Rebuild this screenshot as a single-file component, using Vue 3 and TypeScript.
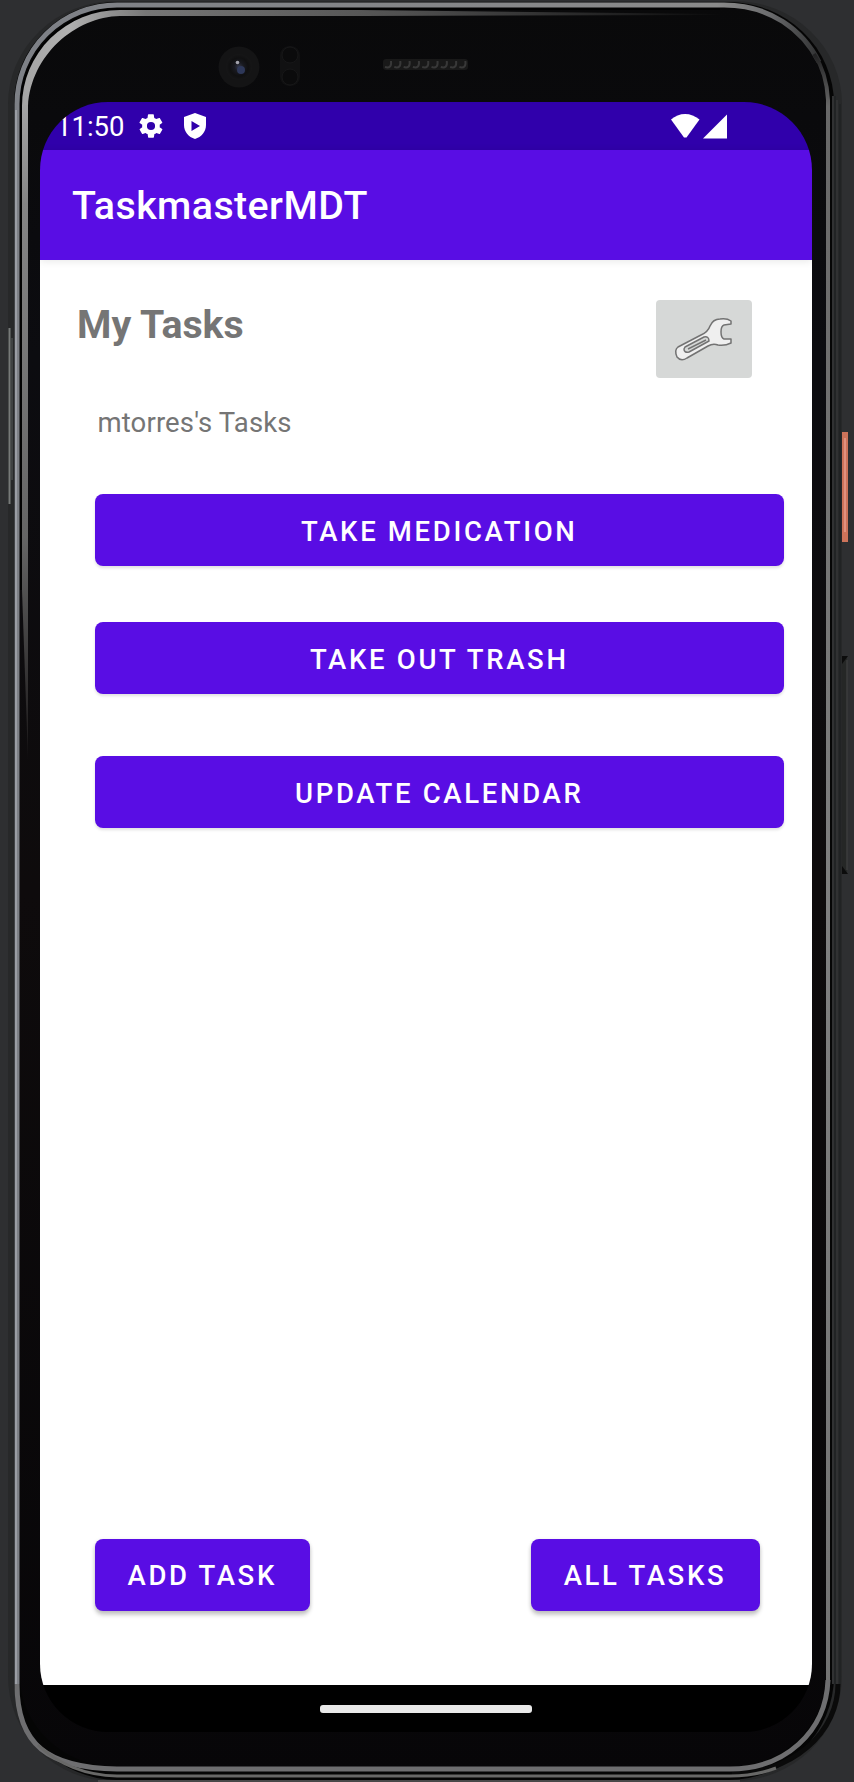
<script setup lang="ts">
interface Task {
  id: number
  title: string
}

const tasks: Task[] = [
  { id: 1, title: 'Take Medication' },
  { id: 2, title: 'Take Out Trash' },
  { id: 3, title: 'Update Calendar' },
]

const speakerHoles: number[] = Array.from({ length: 9 }, (_, i) => 388 + i * 9.3)
</script>

<template>
  <div class="stage">
    <svg class="device" viewBox="0 0 854 1782" width="854" height="1782" aria-hidden="true">
      <defs>
        <linearGradient id="rim" gradientUnits="userSpaceOnUse" x1="0" y1="0" x2="854" y2="0">
          <stop offset="0" stop-color="#7d8086" />
          <stop offset="0.84" stop-color="#8a8a8a" />
          <stop offset="0.9" stop-color="#6c6d6f" />
          <stop offset="0.96" stop-color="#303132" />
        </linearGradient>
        <linearGradient id="bevelTop" gradientUnits="userSpaceOnUse" x1="20" y1="0" x2="720" y2="0">
          <stop offset="0" stop-color="#a4a4a4" />
          <stop offset="0.07" stop-color="#b0b0b0" />
          <stop offset="0.18" stop-color="#777777" />
          <stop offset="0.55" stop-color="#505050" />
          <stop offset="1" stop-color="#0a0a0b" />
        </linearGradient>
        <linearGradient id="bevelSide" gradientUnits="userSpaceOnUse" x1="0" y1="104" x2="0" y2="770">
          <stop offset="0" stop-color="#a4a4a4" />
          <stop offset="0.15" stop-color="#858585" />
          <stop offset="0.65" stop-color="#656565" />
          <stop offset="1" stop-color="#151213" />
        </linearGradient>
        <linearGradient id="rightRim" gradientUnits="userSpaceOnUse" x1="0" y1="55" x2="0" y2="1760">
          <stop offset="0" stop-color="#222223" />
          <stop offset="0.03" stop-color="#686868" />
          <stop offset="0.5" stop-color="#808080" />
          <stop offset="0.96" stop-color="#737373" />
          <stop offset="1" stop-color="#4a4a4a" />
        </linearGradient>
        <linearGradient id="body" gradientUnits="userSpaceOnUse" x1="0" y1="0" x2="0" y2="1782">
          <stop offset="0" stop-color="#09090a" />
          <stop offset="0.2" stop-color="#0c0c10" />
          <stop offset="0.5" stop-color="#0e0b0c" />
          <stop offset="1" stop-color="#070608" />
        </linearGradient>
        <radialGradient id="lens">
          <stop offset="0" stop-color="#34384c" />
          <stop offset="0.35" stop-color="#191a20" />
          <stop offset="0.7" stop-color="#101011" />
          <stop offset="1" stop-color="#161617" />
        </radialGradient>
      </defs>

      <path d="M8 104 A108 103 0 0 1 116 1 H734 A108 103 0 0 1 842 104 V1676 A108 105 0 0 1 734 1781 H112 A104 105 0 0 1 8 1676 Z" fill="#272829" />
      <path d="M14 104 A103 102 0 0 1 117 2 H728 A106 102 0 0 1 834 104 V1676 A106 104 0 0 1 728 1780 H117 A103 104 0 0 1 14 1676 Z" fill="#050505" />
      <path d="M833 96 V1684 M837 100 V1684" fill="none" stroke="#303132" stroke-width="2" />
      <path d="M835 96 V1684 M840 104 V1684" fill="none" stroke="#212324" stroke-width="2" />
      <path d="M838 1684 A106 90 0 0 1 732 1774" fill="none" stroke="#0a0a0a" stroke-width="5" />
      <path d="M20 104 A98 96 0 0 1 118 8 H728 A98 96 0 0 1 826 104 V1676 A98 91 0 0 1 728 1767 H118 A98 91 0 0 1 20 1676 Z" fill="url(#body)" />
      <path d="M17 1684 V104 A100 99 0 0 1 117 5 H724 C770 5 803 30 819 62" fill="none" stroke="url(#rim)" stroke-width="5" />
      <path d="M16 1684 V110" stroke="#9a9da4" stroke-width="2" />
      <path d="M21 590 V106 A98 97 0 0 1 119 9 H720" fill="none" stroke="#020202" stroke-width="2" />
      <path d="M22 106 A98 96 0 0 1 120 10 H360 L720 14 V15 L360 16 H120 C75 17 31 55 28 106 Z" fill="url(#bevelTop)" />
      <path d="M22 105 H28 V760 L22 590 Z" fill="url(#bevelSide)" />
      <path d="M828 1682 V100 C827 80 822 66 814 54" fill="none" stroke="url(#rightRim)" stroke-width="4" />
      <path d="M828 1680 C826 1732 785 1769 730 1769 H117 C48 1768 17 1745 17 1684" fill="none" stroke="#6e6e70" stroke-width="5" />
      <path d="M776 1768 Q755 1776 730 1776 H117 Q70 1775 38 1745" fill="none" stroke="#686867" stroke-width="3" />
      <path d="M98 1781 H740" stroke="#484848" stroke-width="2" />

      <path d="M9.5 328 V504" stroke="#777a79" stroke-width="2" />
      <path d="M12 338 V480" stroke="#484b4b" stroke-width="1.5" />
      <rect x="842" y="432" width="6" height="110" fill="#cd735a" />
      <rect x="844" y="438" width="2" height="94" fill="#e2917e" />
      <rect x="842" y="656" width="5" height="218" fill="#252726" />
      <path d="M847 660 V870" stroke="#3b3d3c" stroke-width="1.5" />
      <path d="M842 656 H848 L842 664 Z M842 866 L848 874 H842 Z" fill="#0c0c0c" />

      <circle cx="239" cy="67" r="20.5" fill="#141415" />
      <circle cx="239" cy="67" r="13" fill="url(#lens)" />
      <circle cx="241" cy="70" r="4" fill="#2e3859" />
      <circle cx="237.5" cy="62.5" r="1.8" fill="#a3a3ac" />
      <rect x="280" y="46" width="20" height="40" rx="9" fill="#111112" />
      <circle cx="290" cy="55" r="8" fill="#0b0b0c" stroke="#171718" />
      <circle cx="290" cy="77" r="8" fill="#0b0b0c" stroke="#171718" />
      <rect x="383" y="59" width="85" height="11" rx="3" fill="#191919" />
      <path v-for="x in speakerHoles" :key="x" :d="`M${x - 3} 67 Q${x + 4} 69 ${x + 3} 61`" fill="none" stroke="#383838" stroke-width="2" />
    </svg>

    <main class="screen">
      <div class="status">
        <span class="clock">11:50</span>
        <svg class="gear" viewBox="0 0 24 24" width="28" height="28">
          <path fill="#fff" fill-rule="evenodd" d="M19.4 13c.1-.3.1-.7.1-1s0-.7-.1-1l2.1-1.6c.2-.2.3-.4.1-.7l-2-3.4c-.1-.2-.4-.3-.6-.2l-2.5 1c-.5-.4-1.1-.7-1.7-1L14.4 2.4c0-.2-.2-.4-.5-.4h-4c-.2 0-.4.2-.5.4L9 5.1c-.6.3-1.2.6-1.7 1l-2.5-1c-.2-.1-.5 0-.6.2l-2 3.4c-.1.2-.1.5.1.7L4.500 11c0 .3-.1.7-.1 1s0 .7.1 1l-2.1 1.6c-.2.2-.2.4-.1.7l2 3.4c.1.2.4.3.6.2l2.500-1c.5.4 1.1.7 1.700 1l.4 2.700c0 .2.2.4.5.4h4c.2 0 .4-.2.5-.4l.4-2.700c.6-.3 1.200-.6 1.700-1l2.500 1c.2.1.5 0 .6-.2l2-3.4c.1-.2.1-.5-.1-.7zM12 15.500A3.500 3.500 0 1 1 12 8.500a3.500 3.500 0 0 1 0 7z" />
        </svg>
        <svg class="shield" viewBox="0 0 22 26" width="22" height="26">
          <path fill="#fff" fill-rule="evenodd" d="M11 0L22 4V12C22 18.5 17.500 24 11 26C4.500 24 0 18.500 0 12V4ZM7.500 8V18L16 13Z" />
        </svg>
        <svg class="signals" viewBox="0 0 57 26" width="57" height="26">
          <path fill="#fff" d="M0 6.500C8-1 20-1 28.500 6.500L15.500 24.500H13Z" />
          <path fill="#fff" d="M32 25.500L56 1.500V25.500Z" />
        </svg>
      </div>

      <header class="appbar">
        <h1>TaskmasterMDT</h1>
      </header>

      <section class="content">
        <div class="heading">
          <h2>My Tasks</h2>
          <button class="settings" type="button" aria-label="Settings">
            <svg viewBox="0 0 96 78" width="96" height="78">
              <g fill="#efefef" stroke="#737373" stroke-width="1.5" stroke-linejoin="round">
                <path d="M22 47L45 35Q52 32 54 26Q57 19 64 19Q71 18 75 21V24L68 25Q65 26 65 32Q65 38 68 39H75V43Q69 46 62 45Q57 43 52 46L31 58Q25 62 21 57Q18 50 22 47Z" />
                <path d="M29 47L48 37Q53 36 53 41L33 52Q28 53 28 49Z" fill="#d6d8d7" />
                <path d="M32 49L50 40" fill="none" />
              </g>
            </svg>
          </button>
        </div>
        <p class="owner">mtorres's Tasks</p>
        <div class="tasks">
          <button v-for="task in tasks" :key="task.id" class="btn" type="button">{{ task.title }}</button>
        </div>
        <div class="actions">
          <button class="btn raised add" type="button">Add Task</button>
          <button class="btn raised all" type="button">All Tasks</button>
        </div>
      </section>

      <nav class="navbar"><span class="pill"></span></nav>
    </main>
  </div>
</template>

<style>
html,
body {
  margin: 0;
  background: #2e2f31;
}
</style>

<style scoped>
.stage {
  position: relative;
  box-sizing: border-box;
  width: 854px;
  height: 1782px;
  padding: 102px 42px 50px 40px;
  overflow: hidden;
  background: #2e2f31;
  font-family: Roboto, sans-serif;
}
.device {
  position: absolute;
  inset: 0;
}
.screen {
  position: relative;
  display: flex;
  flex-direction: column;
  width: 772px;
  height: 1630px;
  overflow: hidden;
  border-radius: 68px;
}
.status {
  display: flex;
  align-items: center;
  height: 47.5px;
  box-sizing: border-box;
  padding: 0 84px 0 16px;
  background: #3000ab;
  color: #fff;
}
.clock {
  width: 81px;
  padding-top: 2px;
  font-size: 27.5px;
  line-height: 32px;
}
.gear {
  flex: none;
}
.shield {
  margin-left: 19px;
}
.signals {
  margin-left: auto;
}
.appbar {
  position: relative;
  display: flex;
  align-items: center;
  height: 110.5px;
  box-sizing: border-box;
  padding: 3px 0 0 32px;
  background: #590de4;
  color: #fff;
  box-shadow: 0 1px 8px rgba(0, 0, 0, 0.1);
}
h1,
h2,
p {
  margin: 0;
}
h1 {
  font-size: 39.3px;
  font-weight: 500;
  letter-spacing: 0.45px;
  line-height: 46px;
}
.content {
  display: flex;
  flex: 1;
  flex-direction: column;
  padding: 40px 28px 0 36px;
  background: #fff;
}
.heading {
  display: flex;
  justify-content: space-between;
  height: 78px;
  padding-right: 32px;
}
h2 {
  padding: 2px 0 0 1px;
  color: #757575;
  font-size: 39.3px;
  font-weight: 700;
  line-height: 46px;
}
button {
  padding: 0;
  border: 0;
  font-family: inherit;
}
.settings {
  width: 96px;
  height: 78px;
  border-radius: 4px;
  background: #d6d8d7;
}
.settings svg {
  display: block;
}
.owner {
  margin: 29px 0 0 21.5px;
  color: #757575;
  font-size: 27.5px;
  letter-spacing: 0.14px;
  line-height: 32px;
}
.tasks {
  display: flex;
  flex-direction: column;
  margin: 55px 0 0 18.5px;
}
.btn {
  height: 72px;
  padding-top: 3px;
  border-radius: 8px;
  background: #590de4;
  box-shadow: 0 2px 3px rgba(0, 0, 0, 0.12);
  color: #fff;
  font-size: 27.5px;
  font-weight: 500;
  letter-spacing: 2.68px;
  line-height: 32px;
  text-transform: uppercase;
}
.tasks .btn + .btn {
  margin-top: 56px;
}
.tasks .btn:last-child {
  margin-top: 62px;
}
.actions {
  display: flex;
  justify-content: space-between;
  margin: auto 24.5px 74px 18.5px;
}
.raised {
  height: 71.5px;
  box-shadow: 0 4px 4px rgba(0, 0, 0, 0.2), 0 1px 4px rgba(0, 0, 0, 0.1);
}
.add {
  width: 215.5px;
}
.all {
  width: 229px;
}
.navbar {
  display: flex;
  justify-content: center;
  height: 47.5px;
  background: #000;
}
.pill {
  width: 212px;
  height: 8px;
  margin-top: 20px;
  border-radius: 3px;
  background: #e9e9e9;
}
</style>
